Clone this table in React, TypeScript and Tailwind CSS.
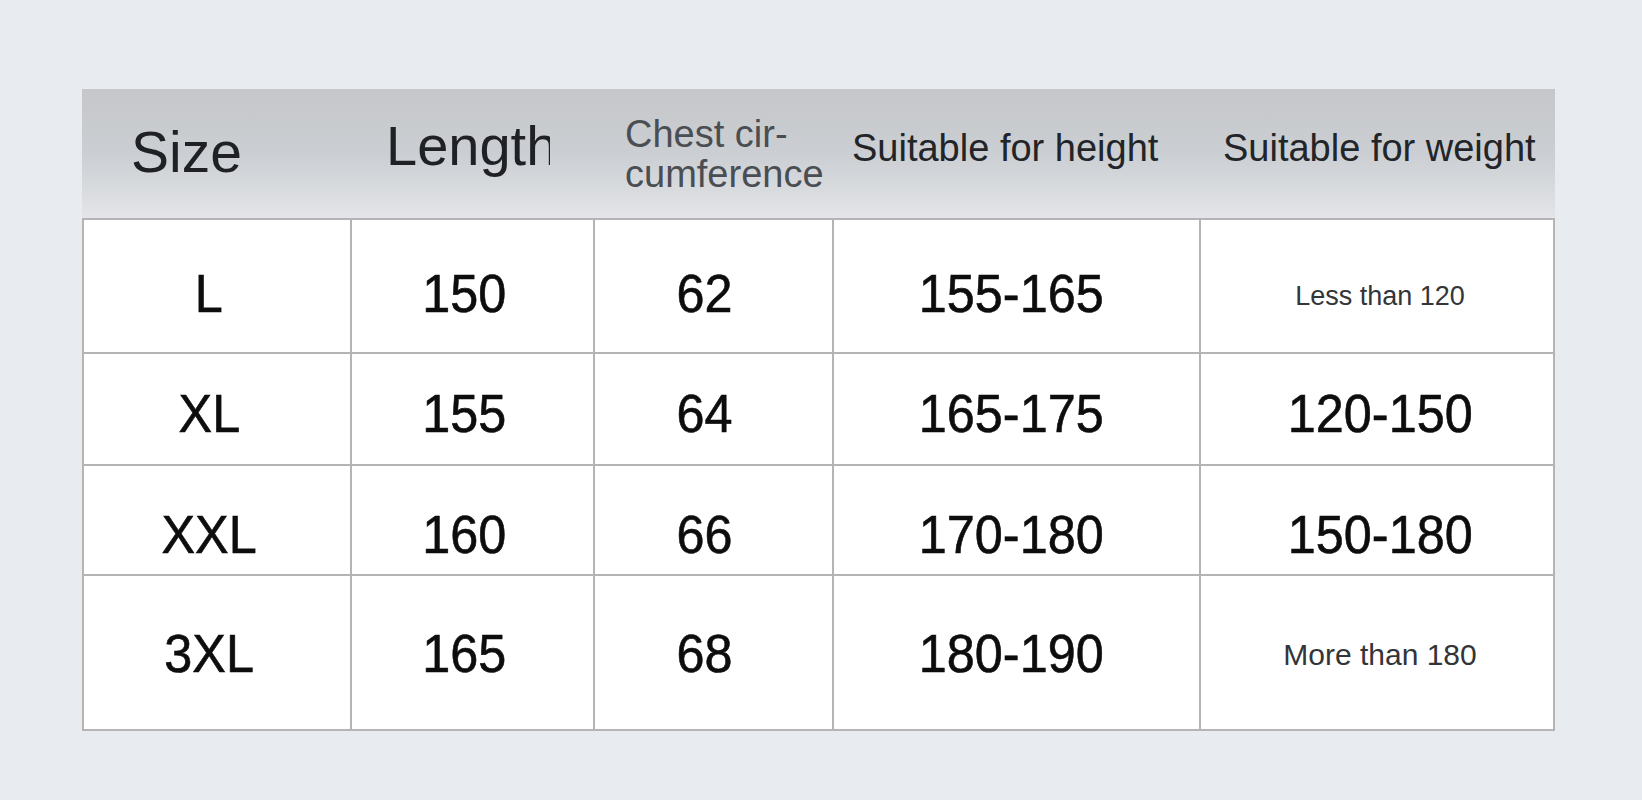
import React from "react";

const font = { fontFamily: '"Liberation Sans", Arial, sans-serif' };

// row heights include the 2px rule under each row
const rows = [
  { size: "L", length: "150", chest: "62", height: "155-165", weight: "Less than 120", small: true, h: "h-[134px]", pt: "pt-[14px]" },
  { size: "XL", length: "155", chest: "64", height: "165-175", weight: "120-150", small: false, h: "h-[112px]", pt: "pt-[8px]" },
  { size: "XXL", length: "160", chest: "66", height: "170-180", weight: "150-180", small: false, h: "h-[110px]", pt: "pt-[28px]" },
  { size: "3XL", length: "165", chest: "68", height: "180-190", weight: "More than 180", small: true, h: "h-[153px]", pt: "pt-[2px]" },
];

function Big({ children }: { children: React.ReactNode }) {
  return (
    <span className="inline-block scale-x-95 text-[53px] leading-none text-[#0d0d0d] [-webkit-text-stroke:0.6px_#0d0d0d]">
      {children}
    </span>
  );
}

export default function App() {
  return (
    <div className="w-full h-[800px] bg-[#e8ebf0] pt-[89px] pl-[82px]" style={font}>
      <div className="w-[1473px]">
        {/* header band */}
        <div className="flex h-[129px] bg-linear-to-b from-[#c5c7ca] via-[#cbced2] to-[#e3e5e8]">
          <div className="w-[270px] flex items-center pl-[49px] pb-[2px]">
            <span className="text-[57px] text-[#1f2124]">Size</span>
          </div>
          <div className="w-[243px] flex items-center pb-[16px]">
            {/* the source chart cuts the last letter off */}
            <div className="w-[198px] pl-[34px] overflow-hidden whitespace-nowrap">
              <span className="text-[56px] text-[#1f2124]">Length</span>
            </div>
          </div>
          <div className="w-[239px] flex items-center pl-[30px]">
            <span className="text-[38px] leading-[40px] text-[#4a4d52] whitespace-nowrap">
              Chest cir-
              <br />
              cumference
            </span>
          </div>
          <div className="w-[367px] flex items-center pl-[18px] pb-[10px]">
            <span className="text-[38px] text-[#222428] whitespace-nowrap">Suitable for height</span>
          </div>
          <div className="w-[354px] flex items-center pl-[22px] pb-[10px]">
            <span className="text-[38px] text-[#222428] whitespace-nowrap">Suitable for weight</span>
          </div>
        </div>

        {/* body grid */}
        <div className="border-2 border-[#b4b4b4] bg-white">
          {rows.map((r, i) => (
            <div
              key={r.size}
              className={`grid grid-cols-[268px_243px_239px_367px_352px] ${r.h} ${
                i < rows.length - 1 ? "border-b-2 border-[#b4b4b4]" : ""
              }`}
            >
              <div className={`flex items-center justify-center border-r-2 border-[#b4b4b4] pr-[16px] ${r.pt}`}>
                <Big>{r.size}</Big>
              </div>
              <div className={`flex items-center justify-center border-r-2 border-[#b4b4b4] pr-[16px] ${r.pt}`}>
                <Big>{r.length}</Big>
              </div>
              <div className={`flex items-center justify-center border-r-2 border-[#b4b4b4] pr-[18px] ${r.pt}`}>
                <Big>{r.chest}</Big>
              </div>
              <div className={`flex items-center justify-center border-r-2 border-[#b4b4b4] pr-[10px] ${r.pt}`}>
                <Big>{r.height}</Big>
              </div>
              <div className={`flex items-center justify-center pl-[6px] ${r.pt}`}>
                {r.small ? (
                  <span
                    className={`${
                      r.size === "L" ? "text-[27px] mt-[7px]" : "text-[30px] mt-[2px]"
                    } text-[#333538]`}
                  >
                    {r.weight}
                  </span>
                ) : (
                  <Big>{r.weight}</Big>
                )}
              </div>
            </div>
          ))}
        </div>
      </div>
    </div>
  );
}
